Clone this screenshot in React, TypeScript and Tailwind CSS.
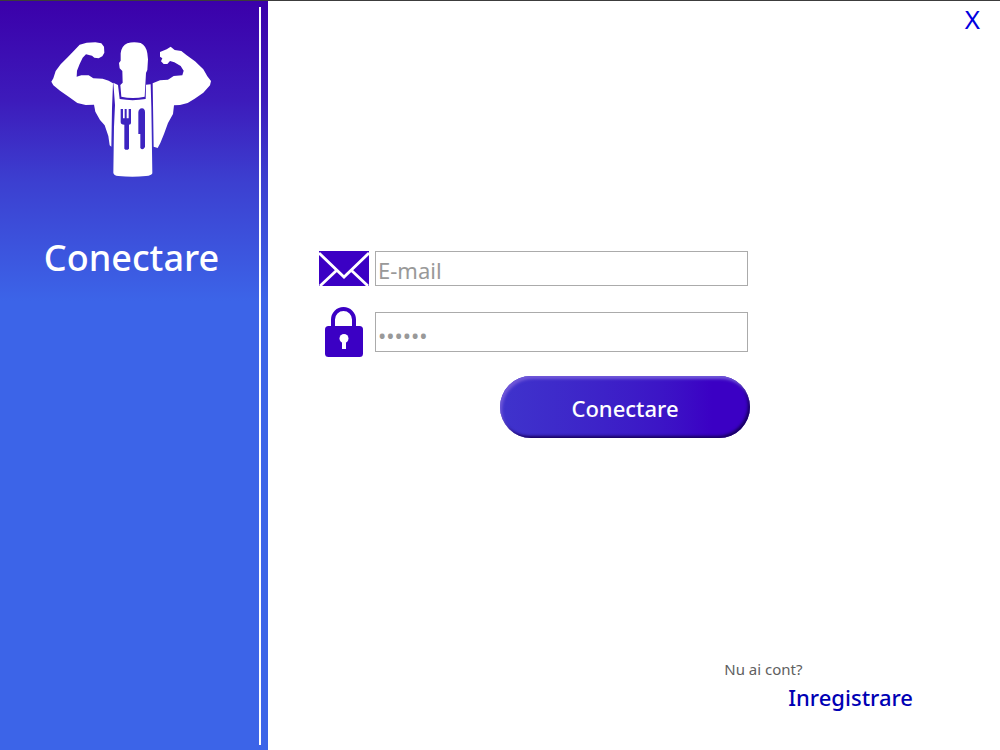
import React from "react";

function ChefLogo() {
  return (
    <svg viewBox="0 0 540 480" className="mt-[23px] ml-10 h-40 w-[180px]" role="img" aria-label="Logo">
      <g fill="#fff">
        <path d="M119 44 L140 38 L166 37 L184 40 L192 50 L193 68 L187 79 L176 85 L163 83 L156 77 L138 73 L128 83 L119 102 L111 122 L110 140 L124 136 L146 136 L160 145 L188 146 L206 152 L219 160 L216 235 L214 350 L209 346 L205 318 L194 286 L180 270 L166 245 L162 224 L137 225 L112 219 L88 202 L60 182 L40 166 L34 155 L40 145 L47 123 L62 103 L83 82 L104 60 Z" />
        <path d="M360 66 L380 58 L392 50 L404 60 L424 63 L440 76 L465 94 L490 118 L502 139 L513 153 L510 166 L490 188 L464 206 L443 219 L420 225 L402 226 L399 252 L384 279 L372 312 L361 339 L353 354 L341 350 L338 160 L360 151 L384 149 L401 138 L427 136 L431 122 L422 108 L403 97 L390 93 L382 102 L371 102 L363 94 L367 85 L360 80 Z" />
        <path d="M242 70 Q245 47 262 40 Q280 34 302 39 Q319 48 322 70 L324 88 L322 120 L318 129 L314 200 Q278 208 244 200 L241 165 L248 158 L247 123 L239 115 L237 99 L242 92 Z" />
        <path d="M220 158 L234 165 L239 207 Q278 214 317 207 L318 164 L332 163 L334 230 L337 430 Q335 437 318 438 Q278 443 235 438 Q221 436 220 428 L222 290 L225 225 Z" />
      </g>
      <g fill="#3d24c0">
        <path d="M242 237 h7 v28 h5 v-28 h6 v28 h6 v-28 h7 v42 q0 5-6 5 v72 q-7 7-14 0 v-72 q-11 0-11-8 Z" />
        <path d="M295 247 Q296 236 306 235 Q315 236 315 247 V351 Q308 363 301 354 V312 H295 Z" />
      </g>
    </svg>
  );
}

function MailIcon() {
  return (
    <svg viewBox="0 0 50 35" className="h-[35px] w-[50px]" aria-hidden="true">
      <path fill="#3b00c4" d="M0 0h50v35H0z" />
      <path d="M0 2 25 26 50 2M1 35 18 19M49 35 32 19" fill="none" stroke="#fff" strokeWidth="2.8" />
    </svg>
  );
}

function LockIcon() {
  return (
    <svg viewBox="0 0 38 50" className="h-[50px] w-[38px]" aria-hidden="true">
      <path d="M8 21V12.5a10.5 10.5 0 0 1 21 0V21" fill="none" stroke="#3b00c4" strokeWidth="4" />
      <rect y="19" width="38" height="31" rx="3.5" fill="#3b00c4" />
      <circle cx="19" cy="31.5" r="4.5" fill="#fff" />
      <path d="M17 33h4v9h-4z" fill="#fff" />
    </svg>
  );
}

export default function App() {
  return (
    <div className="flex min-h-screen border-t border-[#3c3c3c] bg-white font-['Noto_Sans','Open_Sans',sans-serif]">
      <aside className="flex w-[268px] shrink-0 bg-[linear-gradient(180deg,#3b00aa_0px,#3d1bbb_100px,#3c3fd0_180px,#3c64e8_300px)] pt-1.5 pb-[5px] pr-[7px]">
        <div className="min-w-0 flex-1 border-r-2 border-white">
          <ChefLogo />
          <h1 className="mt-11 pl-1 text-center text-4xl font-medium leading-[48px] text-white">Conectare</h1>
        </div>
      </aside>

      <main className="flex flex-1 flex-col">
        <div className="flex justify-end pr-5 pt-0.5">
          <button type="button" aria-label="Închide" className="text-[26px] leading-[32px] text-[#0000e0]">
            X
          </button>
        </div>

        <form className="ml-[51px] mt-[216px] w-[431px]" onSubmit={(e) => e.preventDefault()}>
          <div className="flex items-center gap-1.5 pr-0.5">
            <label htmlFor="email" aria-label="E-mail" className="flex w-[50px] justify-center">
              <MailIcon />
            </label>
            <input
              id="email"
              type="email"
              placeholder="E-mail"
              className="h-[35px] min-w-0 flex-1 border border-[#ababab] px-0.5 pt-0.5 text-[22px] outline-none placeholder:text-[#999]"
            />
          </div>
          <div className="mt-[21px] flex items-center gap-1.5 pr-0.5">
            <label htmlFor="password" aria-label="Parola" className="flex w-[50px] justify-center">
              <LockIcon />
            </label>
            <input
              id="password"
              type="password"
              placeholder="••••••"
              className="h-10 min-w-0 flex-1 border border-[#ababab] px-0.5 pt-1.5 text-[22px] outline-none placeholder:text-[#999]"
            />
          </div>
          <button
            type="submit"
            className="ml-[181px] mt-[19px] h-[62px] w-[250px] rounded-full bg-linear-to-r from-[#3f33cc] to-[#3b00c4] to-85% pt-0.5 text-[22px] font-medium text-white shadow-[inset_2px_3px_3px_#7058d8,inset_-2px_-2px_3px_#180060]"
          >
            Conectare
          </button>
        </form>

        <div className="mt-auto flex flex-col self-end pb-[37px] pr-[87px]">
          <p className="-ml-[64px] text-[15px] leading-5 text-[#606060]">Nu ai cont?</p>
          <a href="#inregistrare" className="pt-0.5 text-[22px] font-medium leading-8 text-[#0000b4]">
            Inregistrare
          </a>
        </div>
      </main>
    </div>
  );
}
